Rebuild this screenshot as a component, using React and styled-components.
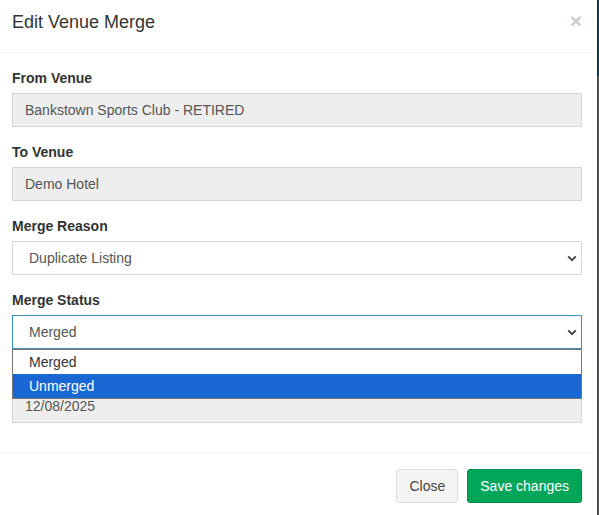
import React from 'react';
import styled, { createGlobalStyle } from 'styled-components';

const GlobalStyle = createGlobalStyle`
  html, body {
    margin: 0;
    padding: 0;
    background: #ffffff;
  }
  body {
    font-family: "Liberation Sans", Arial, Helvetica, sans-serif;
    font-size: 14px;
    color: #333;
  }
`;

const Page = styled.div`
  display: flex;
  align-items: flex-start;
  width: 599px;
  height: 515px;
  overflow: hidden;
`;

const Modal = styled.div`
  width: 597px;
  flex: none;
  background: #fff;
`;

const Backdrop = styled.div`
  flex: 1;
  align-self: stretch;
  background: linear-gradient(to bottom, #083b4b 0, #083b4b 76px, #4d4d4d 76px, #4d4d4d 100%);
`;

const Header = styled.div`
  display: flex;
  align-items: center;
  justify-content: space-between;
  height: 53px;
  padding: 0 15px 8px 12px;
  box-sizing: border-box;
  border-bottom: 1px solid #f4f4f4;
`;

const Title = styled.h4`
  margin: 0;
  font-size: 18px;
  font-weight: 400;
  line-height: 22px;
  color: #333;
`;

const CloseX = styled.button`
  border: 0;
  background: none;
  padding: 0;
  margin-top: -4px;
  font-family: "Liberation Sans", Arial, sans-serif;
  font-size: 21px;
  font-weight: 700;
  line-height: 1;
  color: #000;
  opacity: 0.2;
  cursor: pointer;
`;

const Body = styled.div`
  padding: 15px 15px 15px 12px;
`;

const Group = styled.div`
  position: relative;
  margin-bottom: 15px;
`;

const Label = styled.label`
  display: block;
  font-weight: 700;
  font-size: 14px;
  line-height: 20px;
  margin-bottom: 5px;
  color: #333;
  visibility: ${p => (p.$covered ? 'hidden' : 'visible')};
`;

const Field = styled.div`
  display: flex;
  align-items: center;
  justify-content: space-between;
  height: 34px;
  box-sizing: border-box;
  padding: ${p => (p.$select ? '0 4px 0 16px' : '0 12px')};
  border: 1px solid ${p => (p.$focus ? '#3c8dbc' : '#d2d6de')};
  background: ${p => (p.$disabled ? '#eeeeee' : '#ffffff')};
  color: #555;
  font-size: 14px;
`;

const Chevron = () => (
  <svg width="10" height="7" viewBox="0 0 10 7">
    <path d="M1.2 1.4 L5 5.2 L8.8 1.4" fill="none" stroke="#444" strokeWidth="1.9" />
  </svg>
);

const OptionList = styled.div`
  position: absolute;
  left: 0;
  right: 0;
  top: 100%;
  background: #fff;
  border: 1px solid #767676;
  z-index: 2;
`;

const Option = styled.div`
  height: 24px;
  line-height: 24px;
  padding-left: 16px;
  font-size: 14px;
  background: ${p => (p.$active ? '#1967d2' : '#fff')};
  color: ${p => (p.$active ? '#fff' : '#333')};
`;

const Footer = styled.div`
  display: flex;
  justify-content: flex-end;
  gap: 9px;
  padding: 15px;
  border-top: 1px solid #f4f4f4;
`;

const Button = styled.button`
  height: 34px;
  padding: 0 12px;
  font-family: "Liberation Sans", Arial, sans-serif;
  font-size: 14px;
  border-radius: 3px;
  border: 1px solid ${p => (p.$primary ? '#008d4c' : '#dddddd')};
  background: ${p => (p.$primary ? '#00a65a' : '#f4f4f4')};
  color: ${p => (p.$primary ? '#fff' : '#444')};
  cursor: pointer;
`;

export default function App() {
  return (
    <>
      <GlobalStyle />
      <Page>
        <Modal>
          <Header>
            <Title>Edit Venue Merge</Title>
            <CloseX aria-label="Close">×</CloseX>
          </Header>
          <Body>
            <Group>
              <Label>From Venue</Label>
              <Field $disabled>Bankstown Sports Club - RETIRED</Field>
            </Group>
            <Group>
              <Label>To Venue</Label>
              <Field $disabled>Demo Hotel</Field>
            </Group>
            <Group>
              <Label>Merge Reason</Label>
              <Field $select>
                <span>Duplicate Listing</span>
                <Chevron />
              </Field>
            </Group>
            <Group>
              <Label>Merge Status</Label>
              <Field $select $focus>
                <span>Merged</span>
                <Chevron />
              </Field>
              <OptionList>
                <Option>Merged</Option>
                <Option $active>Unmerged</Option>
              </OptionList>
            </Group>
            <Group>
              <Label $covered>Merge Date</Label>
              <Field $disabled>12/08/2025</Field>
            </Group>
          </Body>
          <Footer>
            <Button>Close</Button>
            <Button $primary>Save changes</Button>
          </Footer>
        </Modal>
        <Backdrop />
      </Page>
    </>
  );
}
